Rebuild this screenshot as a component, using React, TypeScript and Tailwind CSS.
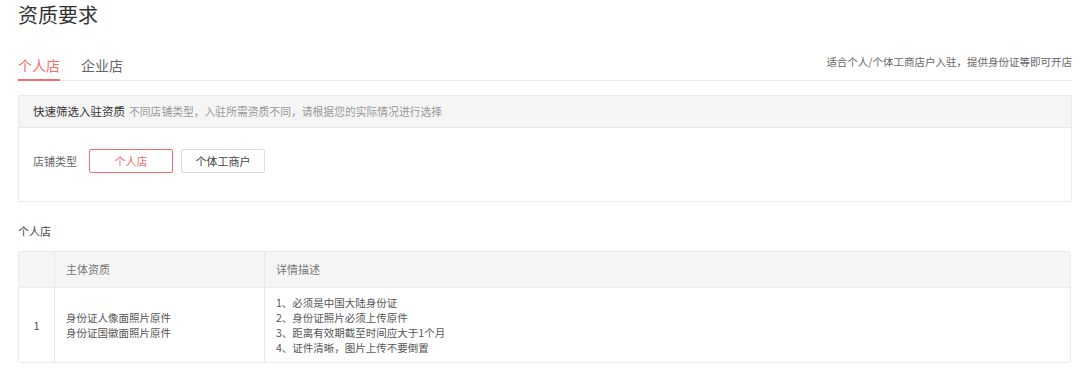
export default function App() {
  const details = [
    "1、必须是中国大陆身份证",
    "2、身份证照片必须上传原件",
    "3、距离有效期截至时间应大于1个月",
    "4、证件清晰，图片上传不要倒置",
  ]

  return (
    <div className="min-h-[376px] bg-white pl-[18px] pr-[8px] font-['Noto_Sans_CJK_SC','Liberation_Sans',sans-serif] text-[#333]">
      {/* Title */}
      <h1 className="pt-[1px] text-[20px] leading-[28px] font-normal text-[#333]">资质要求</h1>

      {/* Tabs */}
      <div className="flex items-end justify-between border-b border-[#e8e8e8]">
        <div className="flex gap-[21px]">
          <div className="-mb-px border-b-2 border-[#f56c6c] pt-[27px] pb-[5px] text-[14px] leading-[18px] text-[#f56c6c]">
            个人店
          </div>
          <div className="-mb-px border-b-2 border-transparent pt-[27px] pb-[5px] text-[14px] leading-[18px] text-[#666]">
            企业店
          </div>
        </div>
        <div className="pb-[10px] text-[10.5px] leading-[16px] text-[#666]">
          适合个人/个体工商店户入驻，提供身份证等即可开店
        </div>
      </div>

      {/* Quick filter */}
      <div className="mt-[14px] border border-[#ebebeb]">
        <div className="flex h-[32px] items-center gap-[4px] border-b border-[#e8e8e8] bg-[#f5f5f5] pl-[14px]">
          <span className="text-[11.5px] text-[#333]">快速筛选入驻资质</span>
          <span className="text-[10.8px] text-[#999]">不同店铺类型，入驻所需资质不同，请根据您的实际情况进行选择</span>
        </div>
        <div className="flex items-center gap-[8px] pt-[21px] pb-[28px] pl-[14px]">
          <span className="w-[48px] text-[11px] text-[#666]">店铺类型</span>
          <button className="h-[24px] w-[84px] rounded-[2px] border border-[#f56c6c] text-[11px] text-[#f56c6c]">
            个人店
          </button>
          <button className="h-[24px] w-[84px] rounded-[2px] border border-[#dcdcdc] text-[11px] text-[#444]">
            个体工商户
          </button>
        </div>
      </div>

      {/* Section */}
      <div className="mt-[20px] text-[11px] leading-[18px] text-[#444]">个人店</div>

      <div className="mt-[11px] mr-px overflow-hidden rounded-[2px] border border-[#ebebeb]">
        <div className="flex h-[35px] bg-[#f5f5f5] text-[11px] text-[#777]">
          <div className="w-[36px] border-r border-[#e8e8e8]" />
          <div className="flex w-[210px] items-center border-r border-[#e8e8e8] pl-[11px]">主体资质</div>
          <div className="flex flex-1 items-center pl-[11px]">详情描述</div>
        </div>
        <div className="flex border-t border-[#ebebeb] text-[10.5px] text-[#555]">
          <div className="flex w-[36px] items-center justify-center border-r border-[#e8e8e8] text-[11px]">1</div>
          <div className="flex w-[210px] flex-col justify-center border-r border-[#e8e8e8] pl-[11px] leading-[15px]">
            <span>身份证人像面照片原件</span>
            <span>身份证国徽面照片原件</span>
          </div>
          <div className="flex flex-1 flex-col py-[7px] pl-[11px] leading-[15px]">
            {details.map((d) => (
              <span key={d}>{d}</span>
            ))}
          </div>
        </div>
      </div>
    </div>
  )
}
